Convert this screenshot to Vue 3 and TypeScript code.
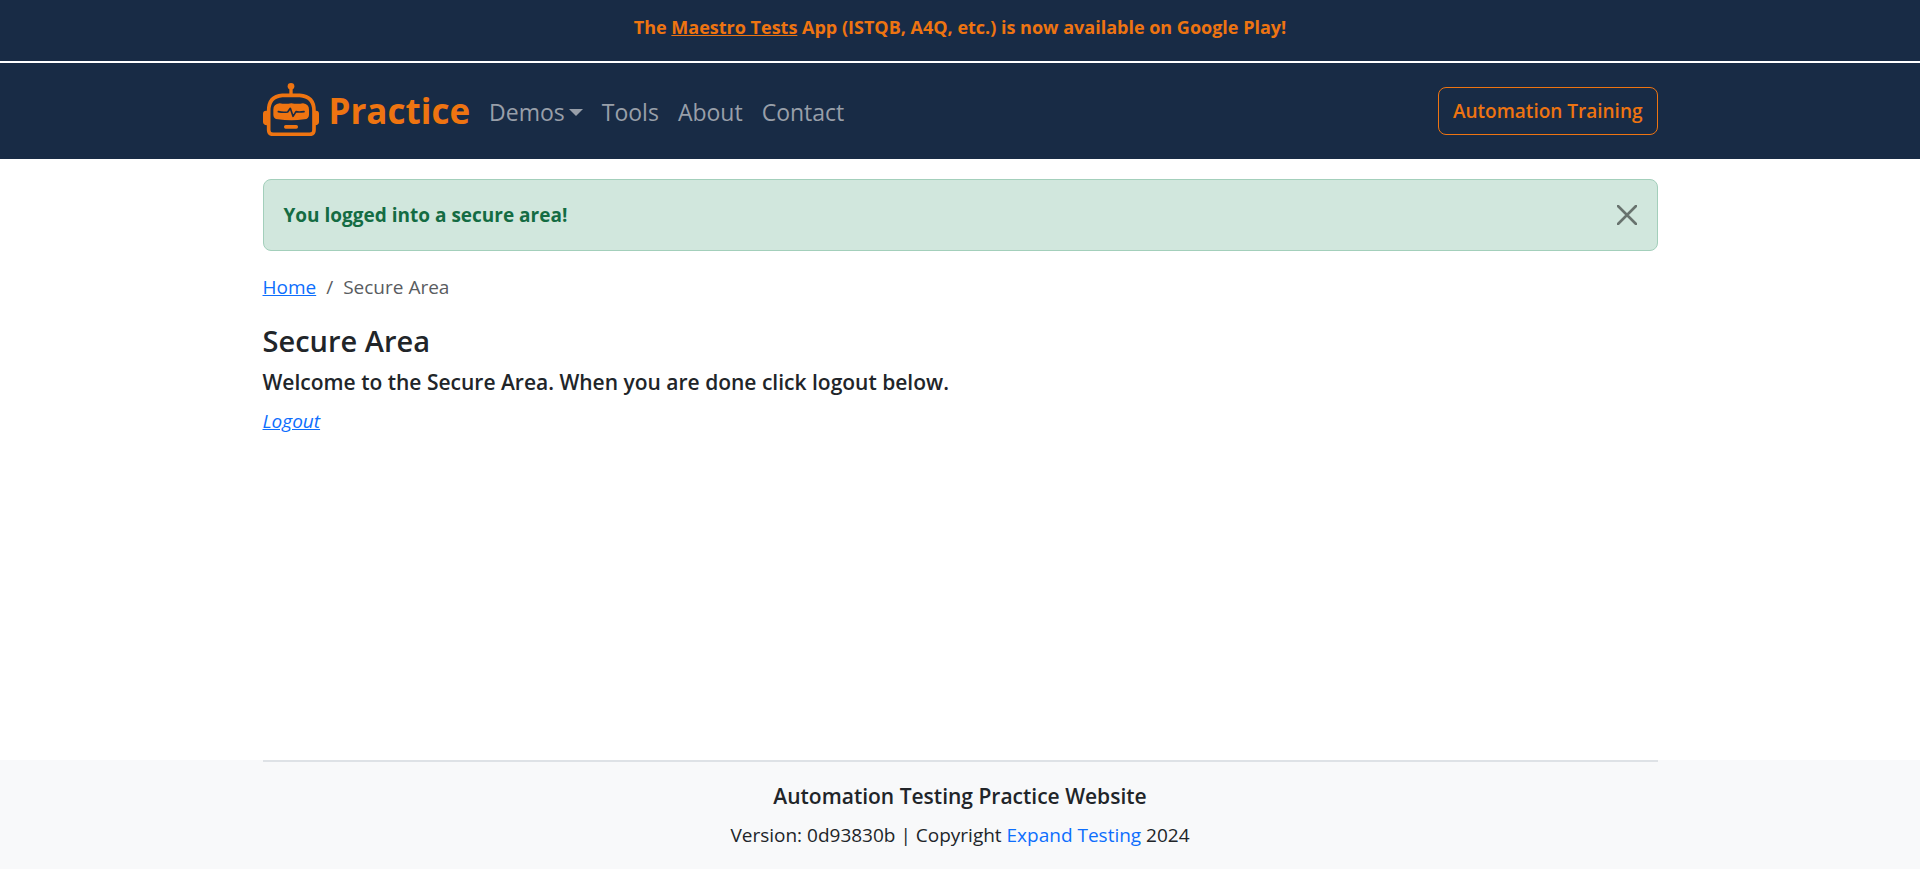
<script setup lang="ts">
import { ref } from 'vue'

interface NavLink {
  label: string
  href: string
}

const links: NavLink[] = [
  { label: 'Tools', href: '#tools' },
  { label: 'About', href: '#about' },
  { label: 'Contact', href: '#contact' },
]

const alertVisible = ref(true)
</script>

<template>
  <div class="page">
    <header>
      <p class="banner">
        The <a href="#maestro">Maestro Tests</a> App (ISTQB, A4Q, etc.) is now available on Google Play!
      </p>
      <nav class="navbar" aria-label="Main">
        <div class="container nav-row">
          <a class="brand" href="#practice">
            <svg class="logo" viewBox="24 24 168 159" aria-hidden="true">
              <g fill="currentColor">
                <circle cx="108" cy="34" r="10" />
                <rect x="103" y="40" width="10" height="20" />
                <path d="M36 107h-3q-9 0-9 9v25q0 9 12 10zM180 107h3q9 0 9 9v25q0 9-12 10z" />
                <path d="M74 85q17 3 35 0q18 3 35 0q18 2 18 19v15q0 12-14 14q-39 6-79 0q-14-2-14-14v-15q0-17 19-19z" />
                <rect x="87" y="150" width="42" height="11" rx="5" />
              </g>
              <path
                d="M82 61h52q43 3 43 46v58q0 13-13 13H54q-13 0-13-13v-58q0-43 41-46z"
                fill="none"
                stroke="currentColor"
                stroke-width="11"
              />
              <path
                class="pulse"
                d="M70 110q14 3 28 1l8-11l8 24l9-14q8 2 24 0"
                fill="none"
                stroke-width="5"
                stroke-linecap="round"
                stroke-linejoin="round"
              />
            </svg>
            <span>Practice</span>
          </a>
          <button class="nav-item dropdown" type="button" aria-haspopup="true">
            Demos<span class="caret"></span>
          </button>
          <a v-for="link in links" :key="link.label" class="nav-item" :href="link.href">{{ link.label }}</a>
          <a class="training" href="#training">Automation Training</a>
        </div>
      </nav>
    </header>

    <main class="container">
      <div v-if="alertVisible" class="alert" role="alert">
        <b>You logged into a secure area!</b>
        <button class="close" type="button" aria-label="Close" @click="alertVisible = false">
          <svg viewBox="0 0 20 20" aria-hidden="true">
            <path d="M1 1L19 19M19 1L1 19" fill="none" stroke="currentColor" stroke-width="2.6" stroke-linecap="round" />
          </svg>
        </button>
      </div>
      <nav aria-label="Breadcrumb">
        <ol class="breadcrumb">
          <li><a href="#home">Home</a></li>
          <li class="slash" aria-hidden="true">/</li>
          <li aria-current="page">Secure Area</li>
        </ol>
      </nav>
      <h1>Secure Area</h1>
      <h2>Welcome to the Secure Area. When you are done click logout below.</h2>
      <a class="logout" href="#logout">Logout</a>
    </main>

    <footer>
      <div class="container foot">
        <h2>Automation Testing Practice Website</h2>
        <p>Version: 0d93830b | Copyright <a href="#expand">Expand Testing</a> 2024</p>
      </div>
    </footer>
  </div>
</template>

<style>
body {
  margin: 0;
}
</style>

<style scoped>
.page {
  display: flex;
  flex-direction: column;
  min-height: 100vh;
  background: #fff;
  color: #212529;
  font-family: "Open Sans", "Noto Sans", sans-serif;
  font-size: 19px;
  line-height: 30px;
}
.page * {
  box-sizing: border-box;
}
h1,
h2,
p,
ol {
  margin: 0;
}
a {
  color: #0d6efd;
}
.container {
  width: 100%;
  max-width: 1395px;
  margin: 0 auto;
}
.banner {
  padding: 12px 0 19px;
  background: #182b45;
  border-bottom: 2px solid #fff;
  color: #ee7411;
  font-size: 18px;
  font-weight: 700;
  text-align: center;
}
.banner a {
  color: inherit;
}
.navbar {
  background: #182b45;
}
.nav-row {
  display: flex;
  align-items: center;
  height: 96px;
  gap: 19px;
}
.brand {
  display: flex;
  align-items: center;
  gap: 10px;
  color: #ee7411;
  font-size: 35px;
  font-weight: 700;
  line-height: 50px;
  text-decoration: none;
}
.logo {
  display: block;
  width: 56px;
  height: 53px;
  margin-bottom: 4px;
}
.pulse {
  stroke: #182b45;
}
.nav-item {
  padding: 2px 0 0;
  border: 0;
  background: none;
  color: #989fa9;
  font: inherit;
  font-size: 23px;
  text-decoration: none;
}
.dropdown {
  display: flex;
  align-items: center;
  gap: 4px;
}
.caret {
  border: 7px solid transparent;
  border-top-color: currentColor;
  border-bottom: 0;
}
.training {
  margin-left: auto;
  padding: 8px 14px;
  border: 1px solid #ee7411;
  border-radius: 8px;
  color: #ee7411;
  font-weight: 600;
  line-height: 30px;
  text-decoration: none;
}
main {
  flex: 1;
}
.alert {
  display: flex;
  align-items: center;
  justify-content: space-between;
  margin: 20px 0;
  padding: 20px;
  border: 1px solid #a3cfbb;
  border-radius: 8px;
  background: #d1e7dd;
  color: #146c43;
}
.close {
  padding: 0;
  border: 0;
  background: none;
  color: #68736e;
}
.close svg {
  display: block;
  width: 20px;
  height: 20px;
}
.breadcrumb {
  display: flex;
  gap: 10px;
  margin-bottom: 20px;
  padding: 0;
  color: #595c5f;
  line-height: 32px;
  list-style: none;
}
h1 {
  margin-bottom: 8px;
  font-size: 29px;
  font-weight: 600;
  line-height: 36px;
}
h2 {
  margin-bottom: 9px;
  font-size: 21px;
  font-weight: 600;
  line-height: 30px;
}
.logout {
  font-style: italic;
}
footer {
  background: #f8f9fa;
  text-align: center;
}
.foot {
  padding: 19px 0;
  border-top: 2px solid #dee2e6;
}
.foot a {
  text-decoration: none;
}
</style>
